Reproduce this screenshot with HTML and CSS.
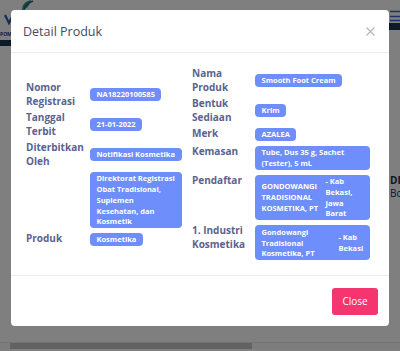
FILE: index.html
```html
<!DOCTYPE html>
<html lang="id">
<head>
    <meta charset="UTF-8">
    <meta name="viewport" content="width=device-width, initial-scale=1.0">
    <title>Detail Produk</title>
    <link rel="stylesheet" href="styles.css">
</head>
<body>
    <div class="page">
        <header class="topbar">
            <div class="brand">
                <svg class="brand-logo" width="34" height="28" viewBox="0 0 34 28">
                    <path d="M22 10 C22 4 26 1 31 0 C30 5 27 9 22 10 Z" fill="#2f9e5b"/>
                    <path d="M24 10 C25 6 28 3 33 1" stroke="#2a5bb8" stroke-width="1.5" fill="none"/>
                    <path d="M5 15 L9 23 L13 15" stroke="#2a5bb8" stroke-width="2.2" fill="none"/>
                </svg>
                <span class="brand-name">POM</span>
            </div>
            <div class="menu">
                <svg width="14" height="12" viewBox="0 0 14 12">
                    <path d="M0 1.5 H14 M0 6.5 H14 M0 10.5 H14" stroke="#3b63c9" stroke-width="1.5"/>
                </svg>
            </div>
        </header>
        <main class="page-main">
            <div class="peek">
                <span class="peek-strong">DI</span>
                <span>Bo</span>
            </div>
        </main>
        <div class="page-scroll"><span class="scroll-thumb"></span></div>
    </div>

    <div class="backdrop"></div>

    <div class="modal">
        <div class="modal-header">
            <h5 class="modal-title">Detail Produk</h5>
            <button class="close-x" aria-label="Close">
                <svg width="9" height="9" viewBox="0 0 9 9">
                    <path d="M0.5 0.5 L8.5 8.5 M8.5 0.5 L0.5 8.5" stroke="#b4b4b4" stroke-width="1.1"/>
                </svg>
            </button>
        </div>
        <div class="modal-body">
            <div class="info-grid left">
                <div class="label">Nomor Registrasi</div>
                <div class="value"><span class="badge">NA18220100585</span></div>

                <div class="label">Tanggal Terbit</div>
                <div class="value"><span class="badge">21-01-2022</span></div>

                <div class="label">Diterbitkan Oleh</div>
                <div class="value"><span class="badge">Notifikasi Kosmetika</span></div>

                <div class="label"></div>
                <div class="value"><span class="badge">Direktorat Registrasi Obat Tradisional, Suplemen Kesehatan, dan Kosmetik</span></div>

                <div class="label">Produk</div>
                <div class="value"><span class="badge">Kosmetika</span></div>
            </div>

            <div class="info-grid right">
                <div class="label">Nama Produk</div>
                <div class="value"><span class="badge">Smooth Foot Cream</span></div>

                <div class="label">Bentuk Sediaan</div>
                <div class="value"><span class="badge">Krim</span></div>

                <div class="label">Merk</div>
                <div class="value"><span class="badge">AZALEA</span></div>

                <div class="label">Kemasan</div>
                <div class="value"><span class="badge">Tube, Dus 35 g, Sachet (Tester), 5 mL</span></div>

                <div class="label">Pendaftar</div>
                <div class="value">
                    <span class="badge split">
                        <span class="split-name">GONDOWANGI TRADISIONAL KOSMETIKA, PT</span>
                        <span class="split-place wide">- Kab Bekasi, Jawa Barat</span>
                    </span>
                </div>

                <div class="label">1. Industri Kosmetika</div>
                <div class="value">
                    <span class="badge split">
                        <span class="split-name">Gondowangi Tradisional Kosmetika, PT</span>
                        <span class="split-place narrow">- Kab Bekasi</span>
                    </span>
                </div>
            </div>
        </div>
        <div class="modal-footer">
            <button class="btn-close">Close</button>
        </div>
    </div>
</body>
</html>
```

FILE: styles.css
```css
body {
    margin: 0;
    font-family: 'Open Sans', 'Noto Sans', sans-serif;
    background-color: #ffffff;
    overflow: hidden;
}
.page {
    height: 351px;
    display: flex;
    flex-direction: column;
}
.topbar {
    display: flex;
    justify-content: space-between;
    align-items: flex-start;
}
.brand {
    display: flex;
    flex-direction: column;
    width: 70px;
    height: 40px;
    border-bottom: 6px solid #1e3550;
}
.brand-logo {
    display: block;
}
.brand-name {
    font-size: 5px;
    font-weight: 700;
    color: #1e3a78;
    line-height: 8px;
    margin-top: 2px;
}
.menu {
    width: 30px;
    height: 30px;
    border-bottom: 7px solid #1e3550;
    padding-left: 20px;
    padding-top: 10px;
    box-sizing: border-box;
}
.menu svg {
    display: block;
}
.page-main {
    flex: 1;
}
.peek {
    display: flex;
    flex-direction: column;
    padding: 128px 0 0 390px;
    font-size: 10px;
    line-height: 13px;
    color: #1c2a55;
    white-space: nowrap;
}
.peek-strong {
    font-weight: 700;
}
.page-scroll {
    height: 6px;
    margin-bottom: 2px;
    border-top: 1px solid #e6e6e6;
    background-color: #fbfbfb;
}
.scroll-thumb {
    display: block;
    width: 242px;
    height: 6px;
    margin-left: 10px;
    background-color: #c4c4c4;
}
.backdrop {
    position: fixed;
    inset: 0;
    background-color: rgba(0, 0, 0, 0.5);
}
.modal {
    position: fixed;
    top: 10px;
    left: 11px;
    width: 378px;
    background-color: #ffffff;
    border-radius: 4px;
}
.modal-header {
    height: 43px;
    box-sizing: border-box;
    padding: 0 14px 0 12px;
    display: flex;
    justify-content: space-between;
    align-items: center;
    border-bottom: 1px solid #eceef3;
}
.modal-title {
    margin: 0;
    font-size: 12.5px;
    font-weight: 500;
    color: #454a68;
}
.close-x {
    border: none;
    background: none;
    padding: 0;
    display: flex;
}
.modal-body {
    padding: 14px 18px 14px 15px;
    display: flex;
    align-items: center;
    gap: 10px;
}
.info-grid {
    display: grid;
    row-gap: 3px;
    align-items: start;
}
.info-grid.left {
    grid-template-columns: 64px 92px;
}
.info-grid.right {
    grid-template-columns: 63px 115px;
}
.label {
    font-size: 10px;
    font-weight: 700;
    line-height: 13.5px;
    color: #5a6390;
}
.value {
    align-self: center;
    display: flex;
    align-items: flex-start;
    padding: 1px 0;
}
.badge {
    background-color: #6d8efb;
    color: #ffffff;
    font-size: 7.5px;
    font-weight: 700;
    line-height: 10.75px;
    padding: 1.1px 6.5px;
    border-radius: 4px;
}
.badge.split {
    display: flex;
    flex: 1;
    justify-content: space-between;
    align-items: center;
    gap: 6px;
    padding-top: 1.4px;
    padding-bottom: 1.4px;
}
.split-name {
    width: 58px;
    flex-shrink: 0;
}
.split-place.wide {
    width: 38px;
}
.split-place.narrow {
    width: 25px;
}
.modal-footer {
    height: 51px;
    box-sizing: border-box;
    border-top: 1px solid #eceef3;
    display: flex;
    justify-content: flex-end;
    align-items: center;
    padding-right: 11px;
}
.btn-close {
    width: 46px;
    height: 27px;
    border: none;
    border-radius: 3px;
    background-color: #f5356f;
    color: #ffffff;
    font-family: 'Open Sans', 'Noto Sans', sans-serif;
    font-size: 10px;
    padding: 0;
}
```
